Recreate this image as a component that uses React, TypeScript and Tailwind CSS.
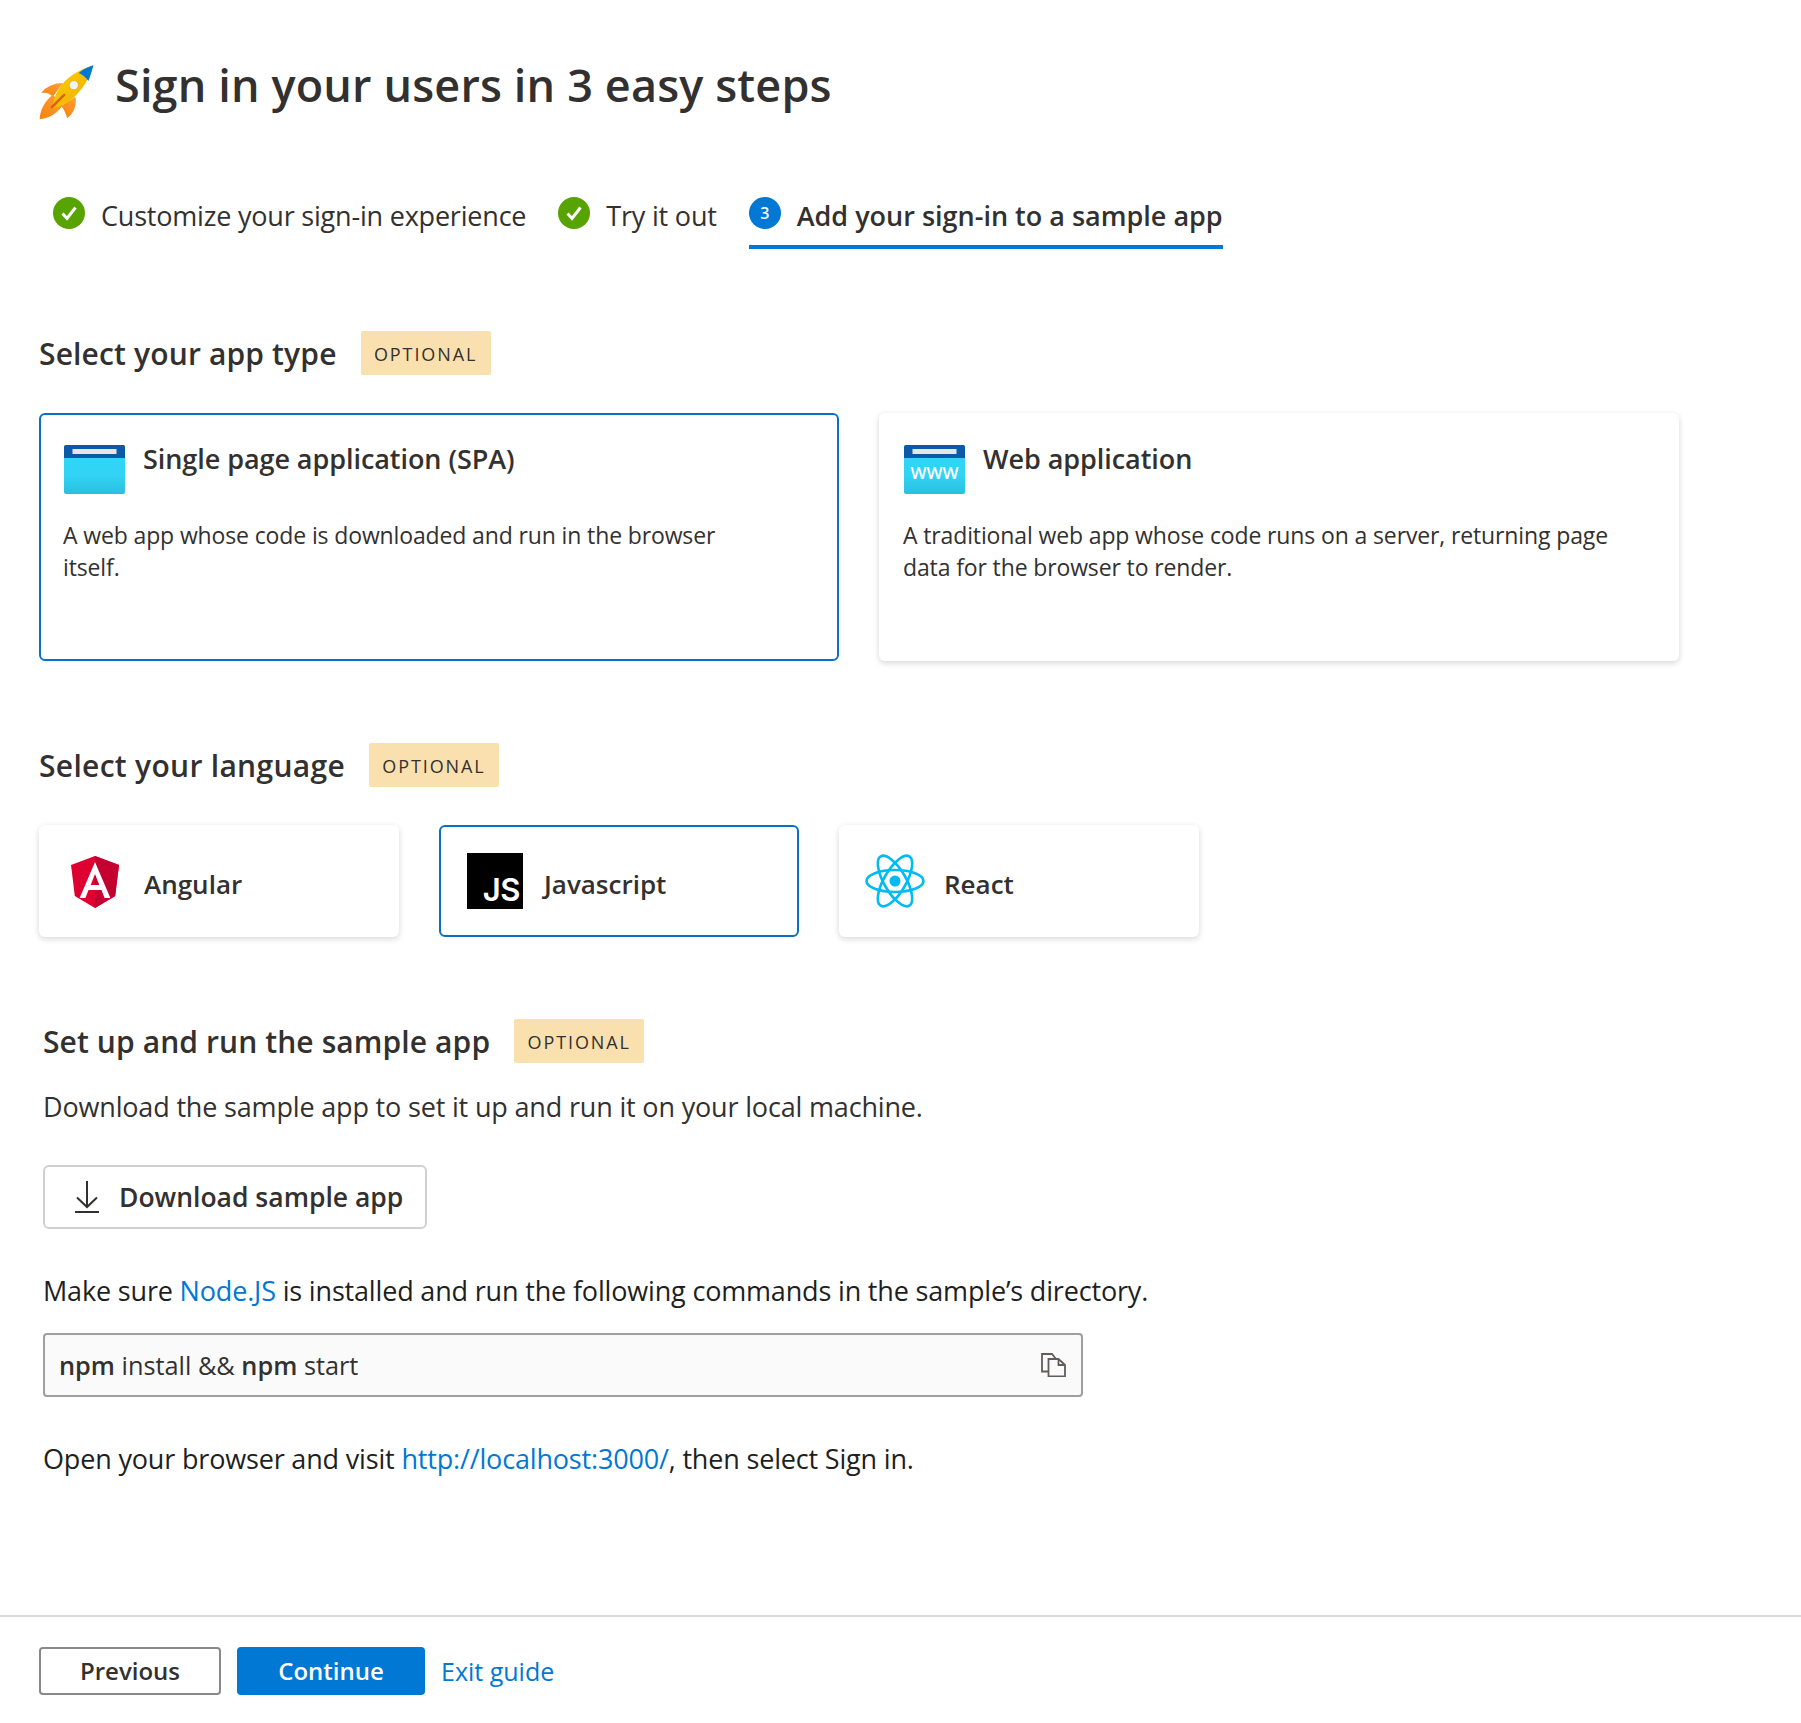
const Rocket = () => (
  <svg width="58" height="58" viewBox="55 70 175 175" className="ml-[-1px] mt-[14px] shrink-0">
    <defs>
      <linearGradient id="fin" x1="1" y1="0" x2="0" y2="1">
        <stop offset="0" stopColor="#ffa033" />
        <stop offset="1" stopColor="#f7820f" />
      </linearGradient>
      <linearGradient id="body" x1="0" y1="0" x2="1" y2="1">
        <stop offset="0" stopColor="#ffd400" />
        <stop offset="1" stopColor="#eda900" />
      </linearGradient>
    </defs>
    <path d="M130 130C105 130 80 140 65 160C80 158 92 163 100 172Z" fill="url(#fin)" />
    <path d="M100 165C75 185 60 215 60 240C85 238 110 225 128 200Z" fill="url(#fin)" />
    <path d="M168 172C174 200 160 225 143 237C140 225 135 212 125 200Z" fill="url(#fin)" />
    <path d="M222 77C180 90 140 112 118 148C106 168 100 190 97 208C120 204 150 188 172 165C196 140 212 110 222 77Z" fill="url(#body)" />
    <path d="M222 77C205 83 190 90 178 100C190 105 200 114 207 124C213 110 218 93 222 77Z" fill="#0078d4" />
    <circle cx="163" cy="137" r="14" fill="#f2f2f2" stroke="#d9a400" strokeWidth="2" />
    <path d="M134 166L97 203" stroke="#d9620f" strokeWidth="8" strokeLinecap="round" />
  </svg>
);

const Check = () => (
  <svg width="32" height="32" viewBox="0 0 32 32" className="shrink-0">
    <circle cx="16" cy="16" r="16" fill="#57a300" />
    <path d="M9.5 16.5L14 21.5L22.5 10.5" fill="none" stroke="#fff" strokeWidth="3" />
  </svg>
);

const Badge = () => (
  <span className="ml-[24px] flex h-[44px] w-[130px] items-center justify-center rounded-[2px] bg-[#f9e0ae] pt-[2px] text-[18px] tracking-[1.9px] text-[#323130]">
    OPTIONAL
  </span>
);

const WindowIcon = ({ www }: { www?: boolean }) => (
  <svg width="61" height="49" viewBox="0 0 61 49" className="shrink-0">
    <defs>
      <linearGradient id="win" x1="0" y1="0" x2="0" y2="1">
        <stop offset="0.6" stopColor="#32d4f5" />
        <stop offset="1" stopColor="#2bbfe0" />
      </linearGradient>
    </defs>
    <rect width="61" height="49" rx="2" fill="url(#win)" />
    <path d="M2 0H59A2 2 0 0 1 61 2V13H0V2A2 2 0 0 1 2 0Z" fill="#0a5aa8" />
    <rect x="8.5" y="4" width="44" height="5" fill="#e6e6e6" />
    {www && (
      <text x="30.5" y="34" textAnchor="middle" fontSize="17" fontWeight="600" fill="#fff" fontFamily="'Open Sans', sans-serif">
        WWW
      </text>
    )}
  </svg>
);

const AppCard = ({ title, desc, www, selected }: { title: string; desc: string; www?: boolean; selected?: boolean }) => (
  <div
    className={`h-[248px] w-[800px] rounded-[6px] bg-white pl-[22px] pr-[24px] pt-[30px] ${
      selected ? "border-2 border-[#0b6fc4]" : "border-2 border-transparent shadow-[0_2px_6px_rgba(0,0,0,0.16)]"
    }`}
  >
    <div className="flex items-start gap-[18px] pl-[1px]">
      <WindowIcon www={www} />
      <span className="mt-[-4px] text-[27px] font-semibold leading-[36px] tracking-[-0.06px] text-[#323130]">{title}</span>
    </div>
    <p className="mt-[25px] max-w-[709px] text-[23px] leading-[32px] tracking-[-0.13px] text-[#323130]">{desc}</p>
  </div>
);

const LangCard = ({ name, icon, selected }: { name: string; icon: React.ReactNode; selected?: boolean }) => (
  <div
    className={`flex h-[112px] w-[360px] items-center rounded-[6px] bg-white ${
      selected ? "border-2 border-[#0b6fc4]" : "border-2 border-transparent shadow-[0_2px_6px_rgba(0,0,0,0.16)]"
    }`}
  >
    <div className="flex w-[101px] shrink-0 justify-center pl-[7px]">{icon}</div>
    <span className="ml-[2px] mt-[6px] text-[26px] font-semibold text-[#323130]">{name}</span>
  </div>
);

const AngularIcon = () => (
  <svg width="48" height="52" viewBox="0 0 50 52" preserveAspectRatio="none" className="mt-[2px]">
    <path d="M25 0L0 9L4 40L25 52L46 40L50 9Z" fill="#dd0031" />
    <path d="M25 0V52L46 40L50 9Z" fill="#c3002f" />
    <path d="M25 6L9 42H15L18.3 34H31.7L35 42H41ZM20.5 29L25 18L29.5 29Z" fill="#fff" />
  </svg>
);

const JsIcon = () => (
  <div className="flex h-[56px] w-[56px] items-end justify-end bg-black pb-[1px] pr-[3px] font-['Inter',sans-serif] text-[31px] font-semibold leading-[36px] tracking-[-0.5px] text-white">
    JS
  </div>
);

const ReactIcon = () => (
  <svg width="60" height="56" viewBox="-30 -28 60 56" fill="none" stroke="#00bcf2" strokeWidth="2.6">
    <ellipse rx="28.5" ry="11" />
    <ellipse rx="28.5" ry="11" transform="rotate(60)" />
    <ellipse rx="28.5" ry="11" transform="rotate(120)" />
    <circle r="5.5" fill="#00bcf2" stroke="none" />
  </svg>
);

const DownloadIcon = () => (
  <svg width="24" height="32" viewBox="0 0 24 32" fill="none" stroke="#323130" strokeWidth="2" className="shrink-0">
    <path d="M12 0V26M2 16.5L12 26L22 16.5M0 31H24" />
  </svg>
);

const CopyIcon = () => (
  <svg width="25" height="24" viewBox="0 0 25 24" fill="none" stroke="#605e5c" strokeWidth="1.8" className="shrink-0">
    <path d="M7 18.5H1V1H11L15 6" />
    <path d="M7.5 6H17.5L24 12V23.5H7.5Z" fill="#fafafa" />
    <path d="M17.5 6V12H24" />
  </svg>
);

export default function App() {
  return (
    <div className="min-h-[1723px] w-full bg-white font-['Open_Sans',sans-serif] text-[#323130]">
      <div className="px-[39px]">
        <div className="mt-[55px] flex h-[60px] items-center gap-[19px]">
          <Rocket />
          <h1 className="text-[45px] font-semibold leading-[60px] tracking-[0.15px] text-[#323130]">Sign in your users in 3 easy steps</h1>
        </div>

        <div className="ml-[14px] mt-[82px] flex h-[52px] items-start gap-[32px] text-[27px] tracking-[-0.2px]">
          <div className="flex gap-[16px]">
            <Check />
            <span className="mt-[1px] leading-[36px]">Customize your sign-in experience</span>
          </div>
          <div className="flex gap-[16px]">
            <Check />
            <span className="mt-[1px] leading-[36px]">Try it out</span>
          </div>
          <div className="flex h-[52px] gap-[16px] border-b-4 border-[#0078d4]">
            <span className="flex h-[32px] w-[32px] shrink-0 items-center justify-center rounded-full bg-[#0078d4] text-[16px] font-semibold text-white">
              3
            </span>
            <span className="mt-[1px] font-semibold leading-[36px] tracking-[0px]">Add your sign-in to a sample app</span>
          </div>
        </div>

        <div className="mt-[82px] flex h-[44px] items-center">
          <h2 className="mt-[2px] text-[30px] font-semibold leading-[40px] tracking-[0.15px]">Select your app type</h2>
          <Badge />
        </div>
        <div className="mt-[38px] flex gap-[40px]">
          <AppCard selected title="Single page application (SPA)" desc="A web app whose code is downloaded and run in the browser itself." />
          <AppCard www title="Web application" desc="A traditional web app whose code runs on a server, returning page data for the browser to render." />
        </div>

        <div className="mt-[82px] flex h-[44px] items-center">
          <h2 className="mt-[2px] text-[30px] font-semibold leading-[40px] tracking-[0.3px]">Select your language</h2>
          <Badge />
        </div>
        <div className="mt-[38px] flex gap-[40px]">
          <LangCard name="Angular" icon={<AngularIcon />} />
          <LangCard selected name="Javascript" icon={<JsIcon />} />
          <LangCard name="React" icon={<ReactIcon />} />
        </div>

        <div className="pl-[4px]">
          <div className="mt-[82px] flex h-[44px] items-center">
            <h2 className="mt-[2px] text-[30px] font-semibold leading-[40px] tracking-[0.1px]">Set up and run the sample app</h2>
            <Badge />
          </div>
          <p className="mt-[24px] text-[27px] leading-[40px] tracking-[-0.17px]">Download the sample app to set it up and run it on your local machine.</p>
          <button className="mt-[38px] flex h-[64px] w-[384px] items-center gap-[20px] rounded-[6px] border-2 border-[#d2d0ce] pl-[30px] text-[26.5px] font-semibold">
            <DownloadIcon />
            <span className="mt-[2px]">Download sample app</span>
          </button>
          <p className="mt-[42px] text-[27px] leading-[40px] tracking-[-0.17px] text-[#201f1e]">
            Make sure <a className="text-[#0078d4]">Node.JS</a> is installed and run the following commands in the sample’s directory.
          </p>
          <div className="mt-[22px] flex h-[64px] w-[1040px] items-center justify-between rounded-[4px] border-2 border-[#a19f9d] bg-[#fafafa] pl-[14px] pr-[15px] text-[25.3px]">
            <span className="mt-[2px]">
              <b className="font-semibold">npm</b> install &amp;&amp; <b className="font-semibold">npm</b> start
            </span>
            <CopyIcon />
          </div>
          <p className="mt-[42px] text-[27px] leading-[40px] tracking-[-0.17px] text-[#201f1e]">
            Open your browser and visit <a className="text-[#0078d4]">http://localhost:3000/</a>, then select Sign in.
          </p>
        </div>
      </div>

      <div className="mt-[136px] flex items-start border-t-2 border-[#d9d9d9] pl-[39px] pt-[30px]">
        <button className="flex h-[48px] w-[182px] items-center justify-center rounded-[4px] border-2 border-[#8a8886] text-[24px] font-semibold">Previous</button>
        <button className="ml-[16px] flex h-[48px] w-[188px] items-center justify-center rounded-[4px] bg-[#0078d4] text-[24px] font-semibold text-white">Continue</button>
        <a className="ml-[16px] flex h-[50px] items-center text-[25px] text-[#0078d4]">Exit guide</a>
      </div>
    </div>
  );
}
